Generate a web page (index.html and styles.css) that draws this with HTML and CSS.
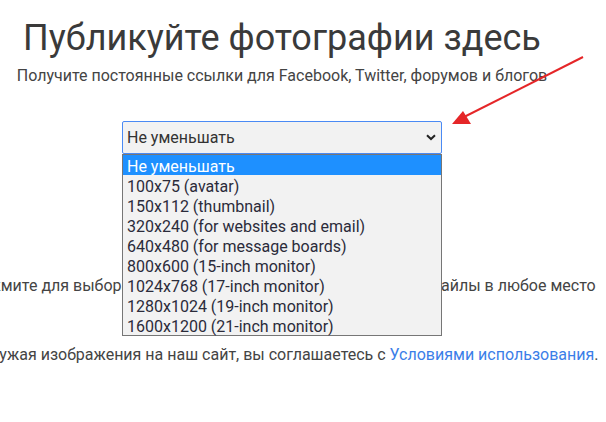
FILE: index.html
```html
<!DOCTYPE html>
<html lang="ru">
<head>
<meta charset="utf-8">
<title>Публикуйте фотографии здесь</title>
<link rel="stylesheet" href="styles.css">
</head>
<body>
<div class="page">
  <h1 class="title">Публикуйте фотографии здесь</h1>
  <p class="sub">Получите постоянные ссылки для Facebook, Twitter, форумов и блогов</p>
  <div class="picker">
    <div class="select">
      <span>Не уменьшать</span>
      <svg class="chev" width="10" height="7" viewBox="0 0 10 7"><path d="M1 1.2 L5 5 L9 1.2" fill="none" stroke="#222" stroke-width="2"/></svg>
    </div>
    <ul class="options">
      <li class="active">Не уменьшать</li>
      <li>100x75 (avatar)</li>
      <li>150x112 (thumbnail)</li>
      <li>320x240 (for websites and email)</li>
      <li>640x480 (for message boards)</li>
      <li>800x600 (15-inch monitor)</li>
      <li>1024x768 (17-inch monitor)</li>
      <li>1280x1024 (19-inch monitor)</li>
      <li>1600x1200 (21-inch monitor)</li>
    </ul>
  </div>
  <div class="line hint"><span>Нажмите для выбора изображений либо просто перетащите файлы в любое место</span></div>
  <div class="line terms"><span>Загружая изображения на наш сайт, вы соглашаетесь с <a href="#">Условиями использования</a>.</span></div>
</div>
<svg class="arrow" width="606" height="422" viewBox="0 0 606 422">
  <line x1="583" y1="57" x2="462" y2="118" stroke="#e52628" stroke-width="2"/>
  <polygon points="452,124 463,111 471,124" fill="#e52628"/>
</svg>
</body>
</html>
```
FILE: styles.css
```css
html, body {
  margin: 0;
  padding: 0;
  background: #fff;
  overflow: hidden;
}
body {
  font-family: Roboto, "Liberation Sans", sans-serif;
  color: #333;
  width: 606px;
  height: 422px;
  position: relative;
}
.page {
  width: 564px;
  padding-top: 16px;
  display: flex;
  flex-direction: column;
  align-items: center;
}
.title {
  margin: 0;
  font-size: 36px;
  line-height: 44px;
  font-weight: 400;
  color: #3a3a3a;
  white-space: nowrap;
}
.sub {
  margin: 6px 0 0;
  font-size: 16px;
  line-height: 20px;
  color: #444;
  white-space: nowrap;
}
.picker {
  position: relative;
  margin-top: 35px;
  width: 320px;
}
.select {
  box-sizing: border-box;
  height: 33px;
  border: 1px solid #4a8af4;
  border-radius: 2px;
  background: #f2f2f2;
  display: flex;
  align-items: center;
  justify-content: space-between;
  padding: 0 5px 0 4px;
  font-size: 16px;
  color: #333;
}
.options {
  position: absolute;
  top: 33px;
  left: 0;
  width: 320px;
  box-sizing: border-box;
  margin: 0;
  padding: 0;
  list-style: none;
  border: 1px solid #767676;
  background: #f2f2f2;
  z-index: 2;
}
.options li {
  height: 19px;
  padding-top: 1px;
  line-height: 21px;
  padding-left: 4px;
  font-size: 16px;
  color: #2b2b3a;
  white-space: nowrap;
}
.options li.active {
  background: #1e90ff;
  color: #fff;
}
.line {
  width: 564px;
  display: flex;
  justify-content: center;
  font-size: 16px;
  line-height: 20px;
  color: #444;
  white-space: nowrap;
}
.hint {
  margin-top: 122px;
}
.terms {
  margin-top: 49px;
}
.terms a {
  color: #3b7ee8;
  text-decoration: none;
}
.arrow {
  position: absolute;
  left: 0;
  top: 0;
  pointer-events: none;
  z-index: 3;
}
```
